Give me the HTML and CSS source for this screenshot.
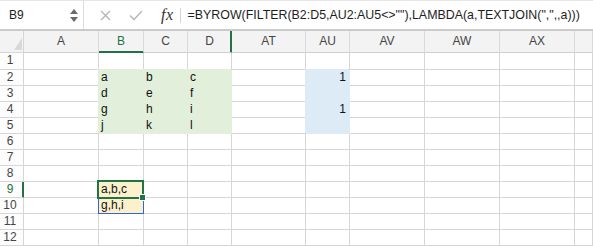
FILE: index.html
```html
<!DOCTYPE html>
<html lang="en">
<head>
    <meta charset="UTF-8">
    <title>Sheet</title>
    <link rel="stylesheet" href="styles.css">
</head>
<body>
<div class="formula-bar">
    <div class="name-box">
        <span class="name">B9</span>
        <span class="spin"><i class="up"></i><i class="down"></i></span>
    </div>
    <div class="bar-tools">
        <svg class="cancel" width="11" height="11" viewBox="0 0 11 11"><path d="M1 1L10 10M10 1L1 10" stroke="#b4b4b4" stroke-width="1.3" fill="none"/></svg>
        <svg class="enter" width="14" height="11" viewBox="0 0 14 11"><path d="M1 5.5L5 9.5L13 1" stroke="#b4b4b4" stroke-width="1.3" fill="none"/></svg>
        <span class="fx">fx</span>
        <span class="bar-sep"></span>
    </div>
    <div class="formula">=BYROW(FILTER(B2:D5,AU2:AU5&lt;&gt;""),LAMBDA(a,TEXTJOIN(",",,a)))</div>
</div>
<div class="sheet" id="sheet"></div>
<script>
    const cols = ['A', 'B', 'C', 'D', 'AT', 'AU', 'AV', 'AW', 'AX', ''];
    const values = {
        B2: 'a', C2: 'b', D2: 'c', AU2: '1',
        B3: 'd', C3: 'e', D3: 'f',
        B4: 'g', C4: 'h', D4: 'i', AU4: '1',
        B5: 'j', C5: 'k', D5: 'l',
        B9: 'a,b,c', B10: 'g,h,i'
    };

    const sheet = document.getElementById('sheet');

    function addCell(cls, text) {
        const cell = document.createElement('div');
        cell.className = cls;
        cell.textContent = text || '';
        sheet.appendChild(cell);
    }

    // header row
    addCell('corner');
    cols.forEach(col => {
        let cls = 'col-head';
        if (col === 'B') cls += ' sel';
        if (col === 'D') cls += ' split';
        addCell(cls, col);
    });

    for (let row = 1; row <= 12; row++) {
        addCell(row === 9 ? 'row-head sel' : 'row-head', row);
        cols.forEach(col => {
            let cls = 'cell';
            const inBlock = row >= 2 && row <= 5;
            if (inBlock && ['B', 'C', 'D'].includes(col)) cls += ' green';
            if (inBlock && col === 'AU') cls += ' blue';
            if (col === 'AU') cls += ' num';
            if (col === 'B' && row === 9) cls += ' spill active';
            if (col === 'B' && row === 10) cls += ' spill spill-end';
            addCell(cls, values[col + row]);
        });
    }
</script>
</body>
</html>
```

FILE: styles.css
```css
body {
    margin: 0;
    padding: 0;
    font-family: "Liberation Sans", Arial, sans-serif;
    background-color: white;
    overflow: hidden;
}

.formula-bar {
    display: flex;
    align-items: center;
    height: 31px;
    box-sizing: border-box;
    border-top: 1px solid #e6e6e6;
    border-bottom: 2px solid #cbcbcb;
    background-color: #fff;
}

.name-box {
    display: flex;
    align-items: center;
    width: 84px;
    height: 100%;
    box-sizing: border-box;
    border-right: 1px solid #dcdcdc;
}

.name {
    font-size: 12px;
    color: #222;
    padding-left: 9px;
    flex: 1;
}

.spin {
    display: flex;
    flex-direction: column;
    gap: 3px;
    margin-right: 5px;
}

.spin i {
    width: 0;
    height: 0;
    border-left: 4px solid transparent;
    border-right: 4px solid transparent;
}

.spin .up {
    border-bottom: 5px solid #6b6b6b;
}

.spin .down {
    border-top: 5px solid #6b6b6b;
}

.bar-tools {
    display: flex;
    align-items: center;
    height: 100%;
}

.cancel {
    margin-left: 16px;
}

.enter {
    margin-left: 18px;
}

.fx {
    margin-left: 18px;
    font-family: "Liberation Serif", serif;
    font-style: italic;
    font-size: 16px;
    color: #333;
    letter-spacing: 0.5px;
}

.bar-sep {
    width: 1px;
    height: 15px;
    background-color: #d4d4d4;
    margin-left: 6px;
}

.formula {
    margin-left: 7px;
    font-size: 12.4px;
    color: #1e1e1e;
    white-space: nowrap;
}

.sheet {
    display: grid;
    grid-template-columns: 24px 75px 45px 44px 44px 74px 44px 75px 75px 75px 1fr;
    grid-template-rows: 22px 17px repeat(11, 16px);
    font-size: 12px;
}

.sheet > div {
    box-sizing: border-box;
    border-right: 1px solid #d6d6d6;
    border-bottom: 1px solid #d6d6d6;
    white-space: nowrap;
    overflow: visible;
}

.corner {
    position: relative;
    background-color: #f3f3f3;
}

.corner::after {
    content: '';
    position: absolute;
    right: 1px;
    bottom: 2px;
    width: 8px;
    height: 12px;
    background-color: #d9d9d9;
    clip-path: polygon(100% 0, 100% 100%, 0 100%);
}

.col-head {
    background-color: #f3f3f3;
    color: #454545;
    text-align: center;
    line-height: 21px;
    border-right-color: #dadada !important;
    border-bottom-color: #cfcfcf !important;
}

.col-head.sel {
    color: #217346;
    border-bottom-color: #217346 !important;
    box-shadow: inset 0 -1px 0 #217346;
}

.col-head.split {
    border-right-color: #217346 !important;
    box-shadow: inset -1px 0 0 #217346;
}

.row-head {
    background-color: #fdfdfd;
    color: #454545;
    text-align: center;
    padding-right: 3px;
    line-height: 15px;
}

.row-head.sel {
    color: #217346;
    border-right-color: #217346 !important;
    box-shadow: inset -1px 0 0 #217346;
}

.cell {
    padding: 0 3px 0 2px;
    line-height: 15px;
    color: #111;
}

.cell.num {
    text-align: right;
}

.green {
    background-color: #e2efda;
    border-color: #e2efda !important;
    box-shadow: -1px -1px 0 #e2efda;
}

.blue {
    background-color: #ddebf7;
    border-color: #ddebf7 !important;
    box-shadow: -1px -1px 0 #ddebf7;
}

.spill {
    position: relative;
    background-color: #fdf1cc;
}

.active::after {
    content: '';
    position: absolute;
    left: -2px;
    top: -2px;
    right: -1px;
    bottom: -2px;
    border: 2px solid #217346;
    z-index: 2;
}

.active::before {
    content: '';
    position: absolute;
    right: -3px;
    bottom: -4px;
    width: 5px;
    height: 5px;
    background-color: #217346;
    border: 1px solid white;
    z-index: 3;
}

.spill-end::after {
    content: '';
    position: absolute;
    left: -1px;
    top: -1px;
    right: -1px;
    bottom: -1px;
    border: 1px solid #2b6ad6;
    z-index: 1;
}
```
